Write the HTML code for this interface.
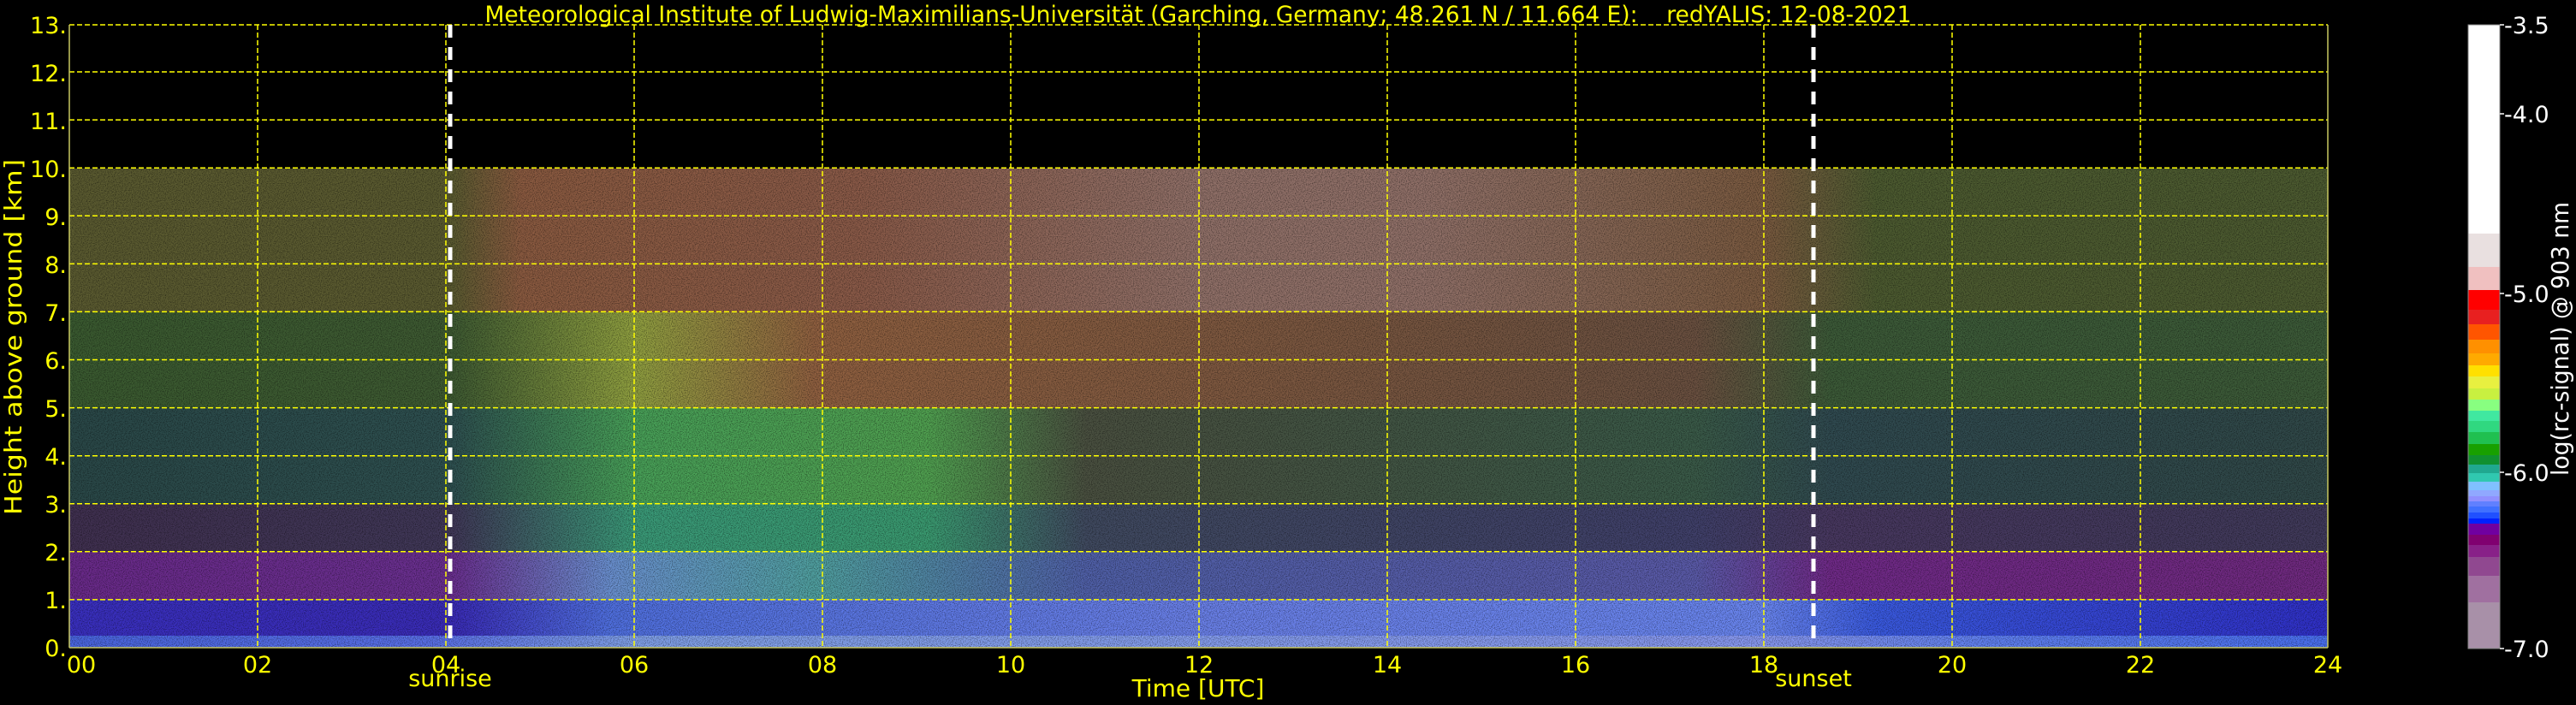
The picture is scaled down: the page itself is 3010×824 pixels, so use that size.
<!DOCTYPE html>
<html><head><meta charset="utf-8"><style>html,body{margin:0;padding:0;background:#000;width:3010px;height:824px;overflow:hidden}svg{display:block}</style></head>
<body>
<svg width="3010" height="824" viewBox="0 0 3010 824" xmlns="http://www.w3.org/2000/svg" font-family="'DejaVu Sans','Liberation Sans',sans-serif">
<defs>
<linearGradient id="gA" x1="0" x2="1"><stop offset="0" stop-color="#4a66e0"/><stop offset="0.16" stop-color="#5a70e8"/><stop offset="0.25" stop-color="#80a0e8"/><stop offset="0.75" stop-color="#8898f0"/><stop offset="0.85" stop-color="#6080f0"/><stop offset="1" stop-color="#4a70f0"/></linearGradient>
<linearGradient id="gB" x1="0" x2="1"><stop offset="0" stop-color="#3a30c0"/><stop offset="0.17" stop-color="#3a2cb8"/><stop offset="0.24" stop-color="#5070e0"/><stop offset="0.5" stop-color="#6a80e8"/><stop offset="0.75" stop-color="#6a86f0"/><stop offset="0.8" stop-color="#3a5ae0"/><stop offset="1" stop-color="#3030c8"/></linearGradient>
<linearGradient id="gC" x1="0" x2="1"><stop offset="0" stop-color="#6a2a8a"/><stop offset="0.17" stop-color="#6a3090"/><stop offset="0.24" stop-color="#6a90d0"/><stop offset="0.33" stop-color="#50a0a0"/><stop offset="0.45" stop-color="#5060a8"/><stop offset="0.72" stop-color="#5a5aa8"/><stop offset="0.78" stop-color="#702a88"/><stop offset="1" stop-color="#702a80"/></linearGradient>
<linearGradient id="gD" x1="0" x2="1"><stop offset="0" stop-color="#403050"/><stop offset="0.17" stop-color="#403858"/><stop offset="0.25" stop-color="#3a9a78"/><stop offset="0.38" stop-color="#3a9a70"/><stop offset="0.45" stop-color="#404a60"/><stop offset="0.72" stop-color="#40406a"/><stop offset="0.78" stop-color="#483860"/><stop offset="1" stop-color="#403a5a"/></linearGradient>
<linearGradient id="gE" x1="0" x2="1"><stop offset="0" stop-color="#2a4848"/><stop offset="0.17" stop-color="#2e5050"/><stop offset="0.25" stop-color="#48a058"/><stop offset="0.38" stop-color="#50a050"/><stop offset="0.45" stop-color="#4a5040"/><stop offset="0.72" stop-color="#3a5a48"/><stop offset="0.78" stop-color="#304a50"/><stop offset="1" stop-color="#304848"/></linearGradient>
<linearGradient id="gF" x1="0" x2="1"><stop offset="0" stop-color="#3a5a30"/><stop offset="0.17" stop-color="#3e5a32"/><stop offset="0.25" stop-color="#90a040"/><stop offset="0.33" stop-color="#906040"/><stop offset="0.72" stop-color="#6a5040"/><stop offset="0.78" stop-color="#3c5a38"/><stop offset="1" stop-color="#3c5a38"/></linearGradient>
<linearGradient id="gG" x1="0" x2="1"><stop offset="0" stop-color="#5a5a30"/><stop offset="0.17" stop-color="#5a5a30"/><stop offset="0.2" stop-color="#8a5a40"/><stop offset="0.35" stop-color="#8a5a48"/><stop offset="0.5" stop-color="#907068"/><stop offset="0.6" stop-color="#907068"/><stop offset="0.75" stop-color="#7a5a40"/><stop offset="0.8" stop-color="#4c5a30"/><stop offset="1" stop-color="#4c5a30"/></linearGradient>
<filter id="nz" x="0" y="0" width="100%" height="100%"><feTurbulence type="fractalNoise" baseFrequency="0.9" numOctaves="1" seed="3"/><feColorMatrix type="matrix" values="0 0 0 0 0  0 0 0 0 0  0 0 0 0 0  3 0 0 0 -1.3"/></filter>
</defs>
<rect width="3010" height="824" fill="#000"/>
<!-- data bands -->
<rect x="81" y="197" width="2639" height="168" fill="url(#gG)"/>
<rect x="81" y="365" width="2639" height="112" fill="url(#gF)"/>
<rect x="81" y="477" width="2639" height="112" fill="url(#gE)"/>
<rect x="81" y="589" width="2639" height="56" fill="url(#gD)"/>
<rect x="81" y="645" width="2639" height="56" fill="url(#gC)"/>
<rect x="81" y="701" width="2639" height="42" fill="url(#gB)"/>
<rect x="81" y="743" width="2639" height="14" fill="url(#gA)"/>
<rect x="81" y="197" width="2639" height="560" filter="url(#nz)" opacity="0.45"/>
<!-- grid -->
<g stroke="#ffff00" stroke-width="1.5" stroke-dasharray="6 3" fill="none">
<line x1="81" x2="2720" y1="700.9" y2="700.9"/><line x1="81" x2="2720" y1="644.8" y2="644.8"/><line x1="81" x2="2720" y1="588.8" y2="588.8"/><line x1="81" x2="2720" y1="532.7" y2="532.7"/><line x1="81" x2="2720" y1="476.6" y2="476.6"/><line x1="81" x2="2720" y1="420.5" y2="420.5"/><line x1="81" x2="2720" y1="364.4" y2="364.4"/><line x1="81" x2="2720" y1="308.4" y2="308.4"/><line x1="81" x2="2720" y1="252.3" y2="252.3"/><line x1="81" x2="2720" y1="196.2" y2="196.2"/><line x1="81" x2="2720" y1="140.1" y2="140.1"/><line x1="81" x2="2720" y1="84" y2="84"/><line x1="81" x2="2720" y1="29" y2="29"/>
<line y1="29" y2="757" x1="301" x2="301"/><line y1="29" y2="757" x1="521" x2="521"/><line y1="29" y2="757" x1="741" x2="741"/><line y1="29" y2="757" x1="961" x2="961"/><line y1="29" y2="757" x1="1181" x2="1181"/><line y1="29" y2="757" x1="1401" x2="1401"/><line y1="29" y2="757" x1="1621" x2="1621"/><line y1="29" y2="757" x1="1841" x2="1841"/><line y1="29" y2="757" x1="2061" x2="2061"/><line y1="29" y2="757" x1="2281" x2="2281"/><line y1="29" y2="757" x1="2501" x2="2501"/>
</g>
<g stroke="#c8c860" stroke-width="1.5" fill="none"><line x1="81" y1="29" x2="81" y2="757"/><line x1="2720" y1="29" x2="2720" y2="757"/><line x1="81" y1="757" x2="2720" y2="757"/></g>
<!-- sunrise/sunset -->
<g stroke="#fff" stroke-width="5" stroke-dasharray="15 11"><line x1="526" y1="29" x2="526" y2="757"/><line x1="2119" y1="29" x2="2119" y2="757"/></g>
<!-- title -->
<text x="1400" y="26" fill="#ffff00" font-size="27" text-anchor="middle" textLength="1667" lengthAdjust="spacingAndGlyphs" xml:space="preserve">Meteorological Institute of Ludwig-Maximilians-Universität (Garching, Germany; 48.261 N / 11.664 E):    redYALIS: 12-08-2021</text>
<!-- y labels -->
<g fill="#ffff00" font-size="27" text-anchor="end">
<text x="78" y="39">13.</text><text x="78" y="95">12.</text><text x="78" y="151">11.</text><text x="78" y="207">10.</text><text x="78" y="263">9.</text><text x="78" y="319">8.</text><text x="78" y="375">7.</text><text x="78" y="431">6.</text><text x="78" y="487">5.</text><text x="78" y="543">4.</text><text x="78" y="599">3.</text><text x="78" y="655">2.</text><text x="78" y="711">1.</text><text x="78" y="767">0.</text>
</g>
<text transform="translate(25,394) rotate(-90)" fill="#ffff00" font-size="28" text-anchor="middle" textLength="416" lengthAdjust="spacingAndGlyphs">Height above ground [km]</text>
<!-- x labels -->
<g fill="#ffff00" font-size="27" text-anchor="middle">
<text x="95" y="786">00</text><text x="301" y="786">02</text><text x="521" y="786">04</text><text x="741" y="786">06</text><text x="961" y="786">08</text><text x="1181" y="786">10</text><text x="1401" y="786">12</text><text x="1621" y="786">14</text><text x="1841" y="786">16</text><text x="2061" y="786">18</text><text x="2281" y="786">20</text><text x="2501" y="786">22</text><text x="2720" y="786">24</text>
<text x="526" y="802">sunrise</text><text x="2119" y="802">sunset</text>
<text x="1400" y="814" font-size="28">Time [UTC]</text>
</g>
<!-- colorbar -->
<g>
<rect x="2884" y="29" width="37" height="244" fill="#ffffff"/>
<rect x="2884" y="273" width="37" height="39" fill="#e9e0e0"/>
<rect x="2884" y="312" width="37" height="27" fill="#f0c0c0"/>
<rect x="2884" y="339" width="37" height="23" fill="#ff0000"/>
<rect x="2884" y="362" width="37" height="17" fill="#e82020"/>
<rect x="2884" y="379" width="37" height="18" fill="#ff5500"/>
<rect x="2884" y="397" width="37" height="16" fill="#ff9000"/>
<rect x="2884" y="413" width="37" height="14" fill="#ffaa00"/>
<rect x="2884" y="427" width="37" height="13" fill="#ffe000"/>
<rect x="2884" y="440" width="37" height="14" fill="#e8f040"/>
<rect x="2884" y="454" width="37" height="13" fill="#c8f040"/>
<rect x="2884" y="467" width="37" height="13" fill="#88ff80"/>
<rect x="2884" y="480" width="37" height="12" fill="#40e8a0"/>
<rect x="2884" y="492" width="37" height="13" fill="#30d880"/>
<rect x="2884" y="505" width="37" height="14" fill="#20c050"/>
<rect x="2884" y="519" width="37" height="13" fill="#18a000"/>
<rect x="2884" y="532" width="37" height="11" fill="#109030"/>
<rect x="2884" y="543" width="37" height="10" fill="#20a890"/>
<rect x="2884" y="553" width="37" height="10" fill="#30c8b0"/>
<rect x="2884" y="563" width="37" height="10" fill="#80c0ff"/>
<rect x="2884" y="573" width="37" height="7" fill="#90a8ff"/>
<rect x="2884" y="580" width="37" height="6" fill="#9090ff"/>
<rect x="2884" y="586" width="37" height="6" fill="#6080ff"/>
<rect x="2884" y="592" width="37" height="7" fill="#4070ff"/>
<rect x="2884" y="599" width="37" height="7" fill="#2050ff"/>
<rect x="2884" y="606" width="37" height="6" fill="#0020ff"/>
<rect x="2884" y="612" width="37" height="13" fill="#7000a0"/>
<rect x="2884" y="625" width="37" height="12" fill="#800070"/>
<rect x="2884" y="637" width="37" height="14" fill="#882088"/>
<rect x="2884" y="651" width="37" height="22" fill="#904890"/>
<rect x="2884" y="673" width="37" height="31" fill="#a070a0"/>
<rect x="2884" y="704" width="37" height="54" fill="#a890a8"/>
<rect x="2884" y="29" width="37" height="729" fill="none" stroke="#888" stroke-width="1"/>
<g stroke="#fff" stroke-width="1.5"><line x1="2921" x2="2926" y1="29" y2="29"/><line x1="2921" x2="2926" y1="133" y2="133"/><line x1="2921" x2="2926" y1="343" y2="343"/><line x1="2921" x2="2926" y1="552" y2="552"/><line x1="2921" x2="2926" y1="758" y2="758"/></g>
<g fill="#fff" font-size="27"><text x="2926" y="39">-3.5</text><text x="2926" y="143">-4.0</text><text x="2926" y="353">-5.0</text><text x="2926" y="562">-6.0</text><text x="2926" y="768">-7.0</text></g>
<text transform="translate(3001,396) rotate(-90)" fill="#fff" font-size="28" text-anchor="middle" textLength="320" lengthAdjust="spacingAndGlyphs">log(rc-signal) @ 903 nm</text>
</g>
</svg>
</body></html>
